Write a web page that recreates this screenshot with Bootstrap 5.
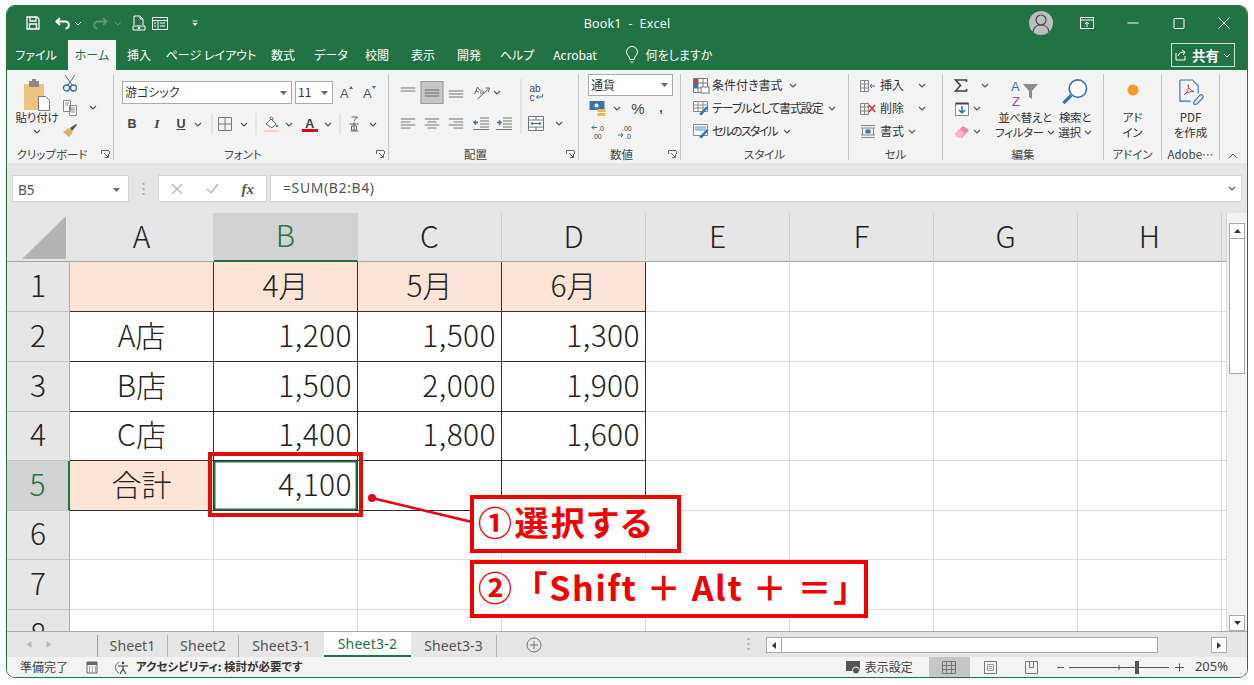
<!DOCTYPE html>
<html lang="ja"><head><meta charset="utf-8"><title>Book1 - Excel</title>
<link href="https://cdn.jsdelivr.net/npm/bootstrap@5.3.0/dist/css/bootstrap.min.css" rel="stylesheet">
<style>
html,body{height:100%;overflow:hidden;background:#fff}
body{position:relative;font-family:"Noto Sans CJK JP","Noto Sans",sans-serif;font-size:12px;color:#444;font-feature-settings:"palt";line-height:1.2}
svg{flex:none;display:block;overflow:visible}
.xwin{position:absolute;left:6px;top:5px;width:1242px;height:673px;border:1px solid #217346;border-radius:9px;overflow:hidden;display:flex;flex-direction:column;background:#f3f3f3}
.tb{display:grid;grid-auto-flow:column;justify-content:start;justify-items:start;align-items:center}
.tb>*{width:max-content;display:flex;justify-content:center;white-space:nowrap;transform:translateX(-50%)}
.xtitle{height:34px;background:#217346;color:#fff;display:grid;grid-template-columns:1fr auto 1fr;align-items:center}
.xtitle .ttext{font-size:12.5px;letter-spacing:.2px;font-family:"Open Sans","Noto Sans CJK JP",sans-serif}
.qat{padding-left:26px;grid-template-columns:30px 15px 22px 18px 21px 21px 35px}
.ctl{justify-self:end;grid-template-columns:46px 46px 46px 45px 23px}
.avatar{width:24px;height:24px;flex:none;border-radius:50%;background:#bdbdbd;align-items:center}
.xtabs{height:30px;background:#217346;display:flex;justify-content:space-between;align-items:center}
.tabrow{height:30px;padding-left:29px;flex-wrap:nowrap;margin:0;grid-template-columns:56px 47px 72px 72px 48px 46px 46px 46px 48px 58px 57px 47px 0}
.tabrow .nav-link{padding:0;height:30px;color:#fff;font-size:12px;align-items:center}
.tabrow .tabon{width:48px;background:#f3f3f3;color:#217346}
.share{width:64px;height:24px;border:1px solid #cfe0d6;margin-right:12px;color:#fff;font-weight:700;font-size:13.5px;gap:4px;padding:0 3px}
.ribbon{height:93px;flex:none;padding:4px 0 3px;display:flex;background:#f3f3f3}
.rgrp{height:86px;flex:none;display:flex;flex-direction:column;border-right:1px solid #c6c6c6}
.rbody{height:74px;display:flex;flex:none}
.rcap{height:12px;display:flex;font-size:11.5px;line-height:12px;color:#444;white-space:nowrap}
.rcap span{flex:1;text-align:center}
.launch{flex:none;width:16px;display:flex;align-items:center;justify-content:center}
.g1{width:107px}.g2{width:275px}.g3{width:190px}.g4{width:102px}.g5{width:168px}.g6{width:94px}.g7{width:161px}.g8{width:58px}.g9{width:58px}
.rc{flex-direction:column}
.combo{height:23px;background:#fff;border:1px solid #ababab;display:flex;align-items:center;justify-content:space-between;padding:0 4px 0 2px;font-size:12px;color:#333}
.cb170{width:170px}.cb38{width:38px;margin-left:3px}.cb85{width:85px;height:22px;margin-left:9px;flex:none}
.cbg{padding-left:8px;padding-top:7px;height:30px;display:flex}
.az{margin-left:14px;grid-template-columns:23px 0;height:23px}
.r22{height:22px}.r23{height:23px}
.f2{margin-top:9px;padding-left:18px;grid-template-columns:25px 24px 17px 14px 13px 19px 12px 16px 17px 21px 18px 12px 14px 19px 0}
.fmt{font-size:12.5px;font-weight:700;color:#444;font-family:"Liberation Sans",sans-serif}
.fmti{font-style:italic;font-family:"Liberation Serif",serif;font-size:13.5px}
.fmtu{text-decoration:underline}
.vs{display:block;width:1px;height:22px;background:#d4d4d4}
.a1{margin-top:7px;height:23px;padding-left:19px;grid-template-columns:24px 24px 26px 15px 39px 0}
.a2{margin-top:8px;height:22px;padding-left:19px;grid-template-rows:22px;grid-template-columns:24px 24px 25px 23px 17px 15px 23px 0}
.vsl{width:1px;height:55px;background:#d4d4d4;align-self:end}
.selb{width:23px;height:23px;background:#c6c6c6;border:1px solid #9e9e9e;flex:none;align-items:center}
.n2{height:23px;padding-left:19px;grid-template-columns:19px 21px 23px 0;margin-top:1px}
.n3{height:23px;padding-left:19px;grid-template-columns:27px 0}
.pct{font-size:15px;color:#444;font-family:"Liberation Sans",sans-serif}
.sline{height:23px;display:flex;align-items:center;padding-left:12px;gap:3px;font-size:12px;white-space:nowrap;color:#333}
.sline svg:last-child{margin-left:3px}
.tsq1{letter-spacing:-1.15px}.tsq2{letter-spacing:-1.8px}
.c1{height:23px;grid-template-columns:24px 30px 0;padding-left:19px;color:#333}
.c3{height:23px;grid-template-columns:24px 20px 0;padding-left:19px;color:#333}
.e1{height:23px;padding-left:18px;grid-template-columns:24px 0}
.e2{height:23px;padding-left:19px;grid-template-columns:15px 0}
.ecol{width:57px;flex:none}
.bigb{flex:none;display:flex;flex-direction:column;align-items:center;padding-top:5px;line-height:15px;font-size:11.5px;color:#333;white-space:nowrap}
.bigb>svg:first-child{height:26px;margin-bottom:5px}
.w50{width:50px;letter-spacing:-.35px}.w57{width:57px}
.w50 span{display:flex;align-items:center;gap:3px}
.cl1{width:42px;margin-left:9px;padding-top:4px;letter-spacing:-.2px}
.bigb>svg.pi{height:33px;margin-bottom:-1px}
.cl2{width:22px;margin-left:1px}
.cl3{width:24px;display:flex;align-items:center;justify-content:center;padding-bottom:8px}
.coll{flex:1;display:flex;align-items:end;justify-content:center;padding-bottom:1px;padding-right:2px}
.fbar{height:50px;flex:none;background:#e6e6e6;padding:12px 5px 11px 5px;display:flex}
.fbox{background:#fff;border:1px solid #d4d4d4;height:27px;display:flex;align-items:center;color:#555}
.nbox{width:117px;padding:3px 8px 0 5px;font-size:13.5px;justify-content:space-between;font-family:"Noto Sans",sans-serif}
.grip{width:29px;flex:none;display:flex;align-items:center;justify-content:center}
.ibox{width:109px;padding:0 12px;justify-content:space-between;margin-right:3px}
.tbox{flex:1;padding:0 5px 0 12px;justify-content:space-between;font-size:14px;font-family:"Noto Sans",sans-serif;letter-spacing:.6px}
.fxs{font-family:"Liberation Serif",serif;font-style:italic;font-weight:700;font-size:15px;color:#555}
.sheetw{height:418px;flex:none;display:flex;background:#fff}
.gridw{width:1220px;height:418px;overflow:hidden;flex:none}
.xl{table-layout:fixed;border-collapse:separate;border-spacing:0;width:1220px;font-size:30px;color:#222;font-family:"Noto Sans CJK JP",sans-serif;font-weight:300;line-height:1}
.xl th,.xl td{padding:0 0 6px 0;border-right:1px solid #dcdcdc;border-bottom:1px solid #dcdcdc;text-align:center;overflow:hidden;white-space:nowrap;font-weight:300}
.xl col.hc{width:63px}.xl col.cc{width:144px}.xl col.ec{width:5px}
.xl thead th{height:48px;background:#e6e6e6;border-right:1px solid #d0d0d0;border-bottom:1px solid #a6a6a6;vertical-align:bottom;padding-bottom:11px}
.xl tbody th{background:#e6e6e6;border-right:1px solid #b0b0b0;border-bottom:1px solid #c6c6c6}
.xl thead th.corner{border-right-color:#e6e6e6;padding:3px 3px 2px 0;vertical-align:top}
.xl thead th.hsel{background:#d2d2d2;color:#217346;border-bottom:2px solid #217346}
.xl tbody th.hsel{background:#d2d2d2;color:#217346;border-right:2px solid #217346}
.rh50 th,.rh50 td{height:50px}.rh49 th,.rh49 td{height:49px}
.xl td.pc{background:#fce4d6}
.xl td.dk{border-right-color:#333;border-bottom-color:#333}
.xl td.num{text-align:right;padding-right:5px;letter-spacing:.4px}
.xl td.sel{box-shadow:inset 0 0 0 1.5px #217346;background:#fff;text-align:right}
.vscroll{width:20px;flex:none;padding:10px 2px 0 2px;background:#f3f3f3;display:flex;flex-direction:column}
.sbtn{flex:none;height:16px;background:#fff;border:1px solid #ababab;display:flex;align-items:center;justify-content:center}
.sthumb{height:135px;background:#fff;border:1px solid #ababab;border-top:0;flex:none}
.strack{flex:1}
.tabbar{height:26px;flex:none;background:#e6e6e6;border-top:1px solid #ababab;display:flex;align-items:flex-start}
.tnav{width:90px;height:25px;flex:none;grid-template-columns:20px 0;padding-left:22px}
.stabs{height:22px;margin:3px 0 0;flex-wrap:nowrap;border-left:1px solid #9e9e9e;width:401px;font-size:14px;color:#555;font-family:"Noto Sans",sans-serif;flex:none}
.stabs .nav-link{color:#555;padding:0;text-align:center;height:22px;line-height:21px;border-right:1px solid #b4b4b4;font-size:14px;letter-spacing:.1px}
.tw70{width:70px}.tw71{width:71px}.tw86{width:86px}
.stabs .ton{background:#fff;color:#217346;border-right:0;border-bottom:2px solid #217346;margin:-3px 0 0 -1px;height:25px;line-height:24px;width:87px;letter-spacing:.25px}
.tplus{flex:none;margin-top:5px;margin-left:28px}
.tgrip{width:19px;margin-left:205px;margin-top:6px;flex:none;display:flex;justify-content:flex-start}
.hs{display:flex;margin-top:5px;height:16px;flex:none;width:461px}
.hb{width:16px;flex:none;height:16px;background:#fff;border:1px solid #ababab;display:flex;align-items:center;justify-content:center}
.hthumb{width:376px;height:16px;background:#fff;border:1px solid #ababab;border-left:0;flex:none}
.hmid{flex:1}
.status{height:20px;flex:none;background:#f3f3f3;display:flex;align-items:center;font-size:12px;color:#444}
.st1{padding-left:13px;width:79px;flex:none}
.stb{font-weight:700;font-size:11.5px;color:#333;white-space:nowrap;margin-left:3px}
.sic{flex:none;width:28px}
.stg{flex:1}
.vsel{width:41px;height:20px;background:#c6c6c6;display:flex;align-items:center;justify-content:center;flex:none}
.vb{width:41px;display:flex;justify-content:center;flex:none}
.zoomz{display:flex;align-items:center;flex:none;margin-left:5px;margin-right:19px}
.ztxt{font-size:13px;color:#444;font-family:"Noto Sans",sans-serif;margin-left:11px}
.redb{position:absolute;border-style:solid;background:transparent}
.rb0{left:208px;top:452px;width:155px;height:65px;border-width:4px;border-color:#e00d0d}
.note{position:absolute;border:4px solid #f00000;background:#fff;color:#f00000;font-weight:700;display:flex;align-items:center;white-space:nowrap;padding-bottom:3px}
.nt1{left:470px;top:495px;width:211px;height:58px;font-size:34px;padding-left:4px;letter-spacing:2.4px}
.nt2{left:470px;top:560px;width:398px;height:58px;font-size:34px;padding-left:4px;letter-spacing:1.6px;font-feature-settings:normal}
.leader{position:absolute;left:364px;top:488px}
</style></head>
<body>
<svg width="0" height="0" class="d-none" aria-hidden="true"><defs>
<symbol id="ch" viewBox="0 0 8 5"><path d="M1 1l3 3 3-3" fill="none" stroke="#555" stroke-width="1.2"/></symbol>
<symbol id="chw" viewBox="0 0 8 5"><path d="M1 1l3 3 3-3" fill="none" stroke="#fff"/></symbol>
<symbol id="dn" viewBox="0 0 7 4"><path d="M0 0h7L3.500 4z" fill="#666"/></symbol>
<symbol id="lc" viewBox="0 0 9 9"><path d="M.5 4V.5H8M3 3l4 4M4 7.500h3.500V4M8.500 1v3" fill="none" stroke="#666"/></symbol>
<symbol id="lt" viewBox="0 0 15 11"><path d="M0 1h15M0 4h15" stroke="#777" fill="none"/></symbol>
<symbol id="lm" viewBox="0 0 15 11"><path d="M0 3h15M0 6h15M0 9h15" stroke="#666" fill="none"/></symbol>
<symbol id="lb" viewBox="0 0 15 11"><path d="M0 4h15M0 7h15M0 10h15" stroke="#777" fill="none"/></symbol>
<symbol id="al" viewBox="0 0 15 11"><path d="M0 1h15M0 4h10M0 7h15M0 10h10" stroke="#777" fill="none"/></symbol>
<symbol id="ac" viewBox="0 0 15 11"><path d="M0 1h15M3 4h9M0 7h15M3 10h9" stroke="#777" fill="none"/></symbol>
<symbol id="ar" viewBox="0 0 15 11"><path d="M0 1h15M5 4h10M0 7h15M5 10h10" stroke="#777" fill="none"/></symbol>
</defs></svg>

<div class="xwin">
 <div class="xtitle">
  <div class="tb qat">
   <span><svg width="14" height="14" viewBox="0 0 14 14"><path d="M1 1h10l2 2v10H1zM4 1v4h6V1M3.500 13V8h7v5" fill="none" stroke="#fff" stroke-width="1.300"/></svg></span>
   <span><svg width="16" height="12" viewBox="0 0 16 12"><path d="M5 1L1.500 4.500 5 8M2 4.500h8c5 0 5 7 .5 7" fill="none" stroke="#fff" stroke-width="2"/></svg></span>
   <span><svg width="8" height="5"><use href="#chw"/></svg></span>
   <span><svg width="16" height="12" viewBox="0 0 16 12"><path d="M11 1l3.500 3.500L11 8M14 4.500H6c-5 0-5 7-.5 7" fill="none" stroke="#5f9478" stroke-width="2"/></svg></span>
   <span><svg width="8" height="5" viewBox="0 0 8 5"><path d="M1 1l3 3 3-3" fill="none" stroke="#5f9478"/></svg></span>
   <span><svg width="14" height="16" viewBox="0 0 14 16"><path d="M2 10V1h6l3 3v6M8 1v3h3M1 11h12v4H1z" fill="none" stroke="#fff"/><circle cx="7" cy="13" r="1.300" fill="#fff"/></svg></span>
   <span><svg width="16" height="13" viewBox="0 0 16 13"><path d="M.5.500h15v12H.500zM.5 3.500h15M6 3.500v9M8 6h5M8 9h5M2 6h2M2 9h2" fill="none" stroke="#fff"/></svg></span>
   <span><svg width="7" height="7" viewBox="0 0 7 7"><path d="M1 1h5" stroke="#fff"/><path d="M1 3h5L3.500 6z" fill="#fff"/></svg></span>
  </div>
  <div class="ttext">Book1 &nbsp;-&nbsp; Excel</div>
  <div class="tb ctl">
   <span class="avatar"><svg width="24" height="24" viewBox="0 0 24 24"><circle cx="12" cy="9" r="5" fill="none" stroke="#444" stroke-width="1.200"/><path d="M4 21c1-6 4-7 8-7s7 1 8 7" fill="none" stroke="#444" stroke-width="1.200"/></svg></span>
   <span><svg width="14" height="12" viewBox="0 0 14 12"><path d="M.5.500h13v11H.500zM.5 3h13" fill="none" stroke="#fff"/><path d="M7 10V5M5 7l2-2 2 2" fill="none" stroke="#fff"/></svg></span>
   <span><svg width="11" height="2"><path d="M0 1h11" stroke="#fff"/></svg></span>
   <span><svg width="11" height="11"><rect x=".5" y=".5" width="10" height="10" rx="1" fill="none" stroke="#fff"/></svg></span>
   <span><svg width="12" height="12"><path d="M.5.500l11 11M11.500.500l-11 11" stroke="#fff"/></svg></span>
  </div>
 </div>
 <div class="xtabs">
  <ul class="nav tb tabrow">
   <li class="nav-item"><a class="nav-link d-flex">ファイル</a></li>
   <li class="nav-item"><a class="nav-link d-flex justify-content-center tabon">ホーム</a></li>
   <li class="nav-item"><a class="nav-link d-flex">挿入</a></li>
   <li class="nav-item"><a class="nav-link d-flex">ページ レイアウト</a></li>
   <li class="nav-item"><a class="nav-link d-flex">数式</a></li>
   <li class="nav-item"><a class="nav-link d-flex">データ</a></li>
   <li class="nav-item"><a class="nav-link d-flex">校閲</a></li>
   <li class="nav-item"><a class="nav-link d-flex">表示</a></li>
   <li class="nav-item"><a class="nav-link d-flex">開発</a></li>
   <li class="nav-item"><a class="nav-link d-flex">ヘルプ</a></li>
   <li class="nav-item"><a class="nav-link d-flex">Acrobat</a></li>
   <li class="nav-item"><a class="nav-link d-flex"><svg class="align-self-center" width="13" height="18" viewBox="0 0 13 18"><path d="M4.500 13.500C4 10 1 9 1 6a5.500 5.500 0 0 1 11 0c0 3-3 4-3.500 7.500zM5 16h3" fill="none" stroke="#fff"/></svg></a></li>
   <li class="nav-item"><a class="nav-link d-flex">何をしますか</a></li>
  </ul>
  <div class="share d-flex align-items-center justify-content-between">
   <svg width="13" height="12" viewBox="0 0 13 12"><path d="M1 4v7h9V7M3 7c1-3 3-4 6-4M7 1l3 2-2 3" fill="none" stroke="#fff"/></svg>
   <span>共有</span>
   <svg width="8" height="5"><use href="#chw"/></svg>
  </div>
 </div>

 <div class="ribbon">
  <!-- clipboard -->
  <div class="rgrp g1">
   <div class="rbody">
    <div class="bigb cl1">
     <svg class="pi" width="28" height="33" viewBox="0 0 28 33"><rect x="1" y="6" width="20" height="26" fill="#ebc57f"/><rect x="6" y="3" width="10" height="6" fill="#8a8a8a"/><rect x="9" y="1" width="4" height="3" fill="#8a8a8a"/><path d="M15.500 18.500h7l4 4v10h-11z" fill="#fff" stroke="#777"/></svg>
     <span>貼り付け</span>
     <svg class="mt-1" width="8" height="5"><use href="#ch"/></svg>
    </div>
    <div class="d-flex flex-column align-items-center cl2">
     <svg width="16" height="18" viewBox="0 0 16 18"><path d="M3 1l7 10M13 1L6 11" stroke="#666" fill="none"/><circle cx="4.500" cy="14" r="3" fill="none" stroke="#3d6f9c" stroke-width="1.300"/><circle cx="11.500" cy="14" r="3" fill="none" stroke="#3d6f9c" stroke-width="1.300"/></svg>
     <svg class="mt-2" width="15" height="16" viewBox="0 0 15 16"><path d="M.5.500h7v11h-7zM6.500 5.500h7v10h-7zM2 3h4M2 5h3M8 8h4M8 10h4M8 12h4" fill="#fff" stroke="#888"/></svg>
     <svg class="mt-2" width="15" height="14" viewBox="0 0 15 14"><path d="M0 8l6 5 4-5-4-4z" fill="#e0b060"/><path d="M7 4l2 3 5-6-1-1z" fill="#555"/></svg>
    </div>
    <div class="cl3"><svg width="8" height="5"><use href="#ch"/></svg></div>
   </div>
   <div class="rcap"><span>クリップボード</span><div class="launch"><svg width="9" height="9"><use href="#lc"/></svg></div></div>
  </div>
  <!-- font -->
  <div class="rgrp g2">
   <div class="rbody rc">
    <div class="cbg">
     <div class="combo cb170"><span>游ゴシック</span><svg width="7" height="4"><use href="#dn"/></svg></div>
     <div class="combo cb38"><span>11</span><svg width="7" height="4"><use href="#dn"/></svg></div>
     <div class="tb az">
      <span><svg width="14" height="15" viewBox="0 0 14 15"><text x="0" y="13" font-size="13" fill="#555" font-family="Liberation Sans">A</text><path d="M9 4l2-3 2 3" fill="#3d6f9c"/></svg></span>
      <span><svg width="14" height="15" viewBox="0 0 14 15"><text x="0" y="13" font-size="13" fill="#555" font-family="Liberation Sans">A</text><path d="M9 1l2 3 2-3" fill="#3d6f9c"/></svg></span>
     </div>
    </div>
    <div class="tb f2 r22">
     <span class="fmt">B</span><span class="fmt fmti">I</span><span class="fmt fmtu">U</span>
     <span><svg width="8" height="5"><use href="#ch"/></svg></span>
     <span><i class="vs"></i></span>
     <span><svg width="14" height="14" viewBox="0 0 14 14"><path d="M.5.500h13v13H.500zM7 .500v13M.5 7h13" fill="none" stroke="#777"/></svg></span>
     <span><svg width="8" height="5"><use href="#ch"/></svg></span>
     <span><i class="vs"></i></span>
     <span><svg width="16" height="16" viewBox="0 0 16 16"><path d="M2 8l5-5 5 5-4 4z" fill="#fff" stroke="#666"/><path d="M6 3c0-3 3-3 3 1" fill="none" stroke="#666"/><path d="M13 8l1.500 3-3 0z" fill="#3d7cc0"/><rect y="14" width="15" height="2" fill="#f8d8c0"/></svg></span>
     <span><svg width="8" height="5"><use href="#ch"/></svg></span>
     <span><svg width="16" height="17" viewBox="0 0 16 17"><text x="3" y="12" font-size="13" font-weight="700" fill="#444" font-family="Liberation Sans">A</text><rect y="13" width="16" height="3" fill="#e00010"/></svg></span>
     <span><svg width="8" height="5"><use href="#ch"/></svg></span>
     <span><i class="vs"></i></span>
     <span><svg width="11" height="16" viewBox="0 0 11 16"><path d="M3 1h6l-3 3M6 4v1M1 8h9M5.500 6v9M3 10h5v4H3zM2 15h8" fill="none" stroke="#666"/></svg></span>
     <span><svg width="8" height="5"><use href="#ch"/></svg></span>
    </div>
   </div>
   <div class="rcap"><span>フォント</span><div class="launch"><svg width="9" height="9"><use href="#lc"/></svg></div></div>
  </div>
  <!-- align -->
  <div class="rgrp g3">
   <div class="rbody rc">
    <div class="tb a1">
     <span><svg width="15" height="11"><use href="#lt"/></svg></span>
     <span class="selb"><svg width="15" height="11"><use href="#lm"/></svg></span>
     <span><svg width="15" height="11"><use href="#lb"/></svg></span>
     <span><svg width="17" height="15" viewBox="0 0 17 15"><path d="M1 9l3-7 3 4M2.500 6l3 1M7 7c2-2 3-1 3 0s-1 2-3 1zM4 14L15 4M12 3l4 0-1 4" fill="none" stroke="#666"/></svg></span>
     <span><svg width="8" height="5"><use href="#ch"/></svg></span>
     <span><svg width="15" height="19" viewBox="0 0 15 19"><text x="1" y="9" font-size="10" fill="#444" font-family="Liberation Sans">ab</text><text x="1" y="18" font-size="10" fill="#444" font-family="Liberation Sans">c</text><path d="M14 11v3H8M10 12l-2 2 2 2" fill="none" stroke="#3d6f9c"/></svg></span>
    </div>
    <div class="tb a2">
     <span><svg width="15" height="11"><use href="#al"/></svg></span>
     <span><svg width="15" height="11"><use href="#ac"/></svg></span>
     <span><svg width="15" height="11"><use href="#ar"/></svg></span>
     <span><svg width="16" height="13" viewBox="0 0 16 13"><path d="M7 1h9M7 4h9M7 7h9M7 10h9M0 12.500h16" stroke="#777" fill="none"/><path d="M5 5.500H1M3 3.500l-2 2 2 2" stroke="#2f6fb0" fill="none" stroke-width="1.300"/></svg></span>
     <span><svg width="16" height="13" viewBox="0 0 16 13"><path d="M7 1h9M7 4h9M7 7h9M7 10h9M0 12.500h16" stroke="#777" fill="none"/><path d="M1 5.500h4M3 3.500l2 2-2 2" stroke="#2f6fb0" fill="none" stroke-width="1.300"/></svg></span>
     <span class="vsl"></span>
     <span><svg width="16" height="15" viewBox="0 0 16 15"><path d="M.5.500h15v14H.500zM.5 4h15M.5 11h15M8 .500V4M8 11v3.500" fill="#fff" stroke="#777"/><path d="M3 7.500h10M5 6L3 7.500 5 9M11 6l2 1.500L11 9" fill="none" stroke="#2f6fb0"/></svg></span>
     <span><svg width="8" height="5"><use href="#ch"/></svg></span>
    </div>
   </div>
   <div class="rcap"><span>配置</span><div class="launch"><svg width="9" height="9"><use href="#lc"/></svg></div></div>
  </div>
  <!-- number -->
  <div class="rgrp g4">
   <div class="rbody rc">
    <div class="combo cb85"><span>通貨</span><svg width="7" height="4"><use href="#dn"/></svg></div>
    <div class="tb n2">
     <span><svg width="17" height="16" viewBox="0 0 17 16"><rect width="15" height="9" fill="#3a75b0"/><circle cx="7" cy="4.500" r="2" fill="#fff"/><rect x="8" y="8" width="8" height="3" fill="#e8b860"/><rect x="8" y="12" width="8" height="3" fill="#e8b860"/></svg></span>
     <span><svg width="8" height="5"><use href="#ch"/></svg></span>
     <span class="pct">%</span>
     <span class="fmt">,</span>
    </div>
    <div class="tb n3">
     <span><svg width="16" height="15" viewBox="0 0 16 15"><path d="M7 3.500H2M4 1.500l-2 2 2 2" fill="none" stroke="#2f6fb0"/><text x="8" y="7" font-size="7" fill="#444" font-family="Liberation Sans">.0</text><text x="2" y="14.500" font-size="7" fill="#444" font-family="Liberation Sans">.00</text></svg></span>
     <span><svg width="16" height="15" viewBox="0 0 16 15"><text x="5" y="7" font-size="7" fill="#444" font-family="Liberation Sans">.00</text><path d="M1 11h5M4 9l2 2-2 2" fill="none" stroke="#2f6fb0"/><text x="8" y="14.500" font-size="7" fill="#444" font-family="Liberation Sans">.0</text></svg></span>
    </div>
   </div>
   <div class="rcap"><span>数値</span><div class="launch"><svg width="9" height="9"><use href="#lc"/></svg></div></div>
  </div>
  <!-- styles -->
  <div class="rgrp g5">
   <div class="rbody rc">
    <div class="sline"><svg width="16" height="15" viewBox="0 0 16 15"><path d="M.5.500h14v14H.500zM.5 5h14M.5 10h14M5 .500v14M10 .500v14" fill="#fff" stroke="#777"/><rect x="1" y="1" width="4" height="4" fill="#c04040"/><rect x="1" y="5" width="4" height="5" fill="#3a75b0"/><rect x="8" y="9" width="8" height="6" fill="#fff" stroke="#777"/></svg><span>条件付き書式</span><svg width="8" height="5"><use href="#ch"/></svg></div>
    <div class="sline"><svg width="16" height="15" viewBox="0 0 16 15"><path d="M.5.500h14v10H.500zM.5 4h14M.5 7h14M5 .500v10M10 .500v10" fill="#fff" stroke="#888"/><path d="M6 13l8-8 1.500 1.500-7 8z" fill="#3a75b0"/></svg><span class="tsq1">テーブルとして書式設定</span><svg width="8" height="5"><use href="#ch"/></svg></div>
    <div class="sline"><svg width="16" height="15" viewBox="0 0 16 15"><path d="M.5.500h14v11H.500z" fill="#fff" stroke="#888"/><rect x="2" y="2" width="11" height="5" fill="#a9c4de"/><path d="M6 13l8-8 1.500 1.500-7 8z" fill="#3a75b0"/></svg><span class="tsq2">セルのスタイル</span><svg width="8" height="5"><use href="#ch"/></svg></div>
   </div>
   <div class="rcap"><span>スタイル</span></div>
  </div>
  <!-- cells -->
  <div class="rgrp g6">
   <div class="rbody rc">
    <div class="tb c1">
     <span><svg width="16" height="14" viewBox="0 0 16 14"><path d="M.5 1.500h8M.5 5h8M.5 9h8M.5 12.500h8M.5 1.500v11M4.500 1.500v11M8.500 1.500v11" fill="none" stroke="#888"/><path d="M15 7H10M12 5l-2 2 2 2" fill="none" stroke="#2f6fb0"/></svg></span>
     <span>挿入</span><span><svg width="8" height="5"><use href="#ch"/></svg></span>
    </div>
    <div class="tb c1">
     <span><svg width="16" height="14" viewBox="0 0 16 14"><path d="M.5 1.500h8M.5 5h8M.5 9h8M.5 12.500h8M.5 1.500v11M4.500 1.500v11M8.500 1.500v11" fill="none" stroke="#888"/><path d="M9 3l6 7M15 3l-6 7" stroke="#d03030" stroke-width="1.500"/></svg></span>
     <span>削除</span><span><svg width="8" height="5"><use href="#ch"/></svg></span>
    </div>
    <div class="tb c3">
     <span><svg width="15" height="15" viewBox="0 0 15 15"><path d="M.5 1.500h14M.5 4h14M.5 11h14M.5 13.500h14M2 4v7M13 4v7" fill="none" stroke="#888"/><rect x="5" y="5.500" width="5" height="4" fill="#3a75b0"/></svg></span>
     <span>書式</span><span><svg width="8" height="5"><use href="#ch"/></svg></span>
    </div>
   </div>
   <div class="rcap"><span>セル</span></div>
  </div>
  <!-- edit -->
  <div class="rgrp g7">
   <div class="rbody">
    <div class="ecol">
     <div class="tb e1"><span><svg width="13" height="13" viewBox="0 0 13 13"><path d="M12 3V1H1l5 5.500L1 12h11v-2" fill="none" stroke="#444" stroke-width="1.600"/></svg></span><span><svg width="8" height="5"><use href="#ch"/></svg></span></div>
     <div class="tb e2"><span><svg width="14" height="14" viewBox="0 0 14 14"><path d="M.5 1.500h13v12H.500z" fill="#fff" stroke="#888"/><path d="M.5 1.500h13" stroke="#444" stroke-width="2"/><path d="M7 4v7M4 8l3 3 3-3" fill="none" stroke="#2f6fb0" stroke-width="1.500"/></svg></span><span><svg width="8" height="5"><use href="#ch"/></svg></span></div>
     <div class="tb e2"><span><svg width="14" height="12" viewBox="0 0 14 12"><path d="M8 0l6 4-7 8-5-1-2-3z" fill="#e88aa8"/><path d="M0 8l4-5 6 4-4 5-4-1z" fill="#f2b7c8"/></svg></span><span><svg width="8" height="5"><use href="#ch"/></svg></span></div>
    </div>
    <div class="bigb w50"><svg width="28" height="26" viewBox="0 0 28 26"><text x="0" y="12" font-size="13" fill="#3a75b0" font-family="Liberation Sans">A</text><text x="1" y="27" font-size="13" fill="#8b4fa8" font-family="Liberation Sans">Z</text><path d="M12 5h15l-6 7v8l-3-2v-6z" fill="#8a8a8a"/></svg><span>並べ替えと</span><span>フィルター<svg width="8" height="5"><use href="#ch"/></svg></span></div>
    <div class="bigb w50"><svg width="28" height="27" viewBox="0 0 28 27"><circle cx="17" cy="10" r="9" fill="#fff" stroke="#3a75b0" stroke-width="1.800"/><path d="M10 17l-8 8" stroke="#3a75b0" stroke-width="3.500"/></svg><span>検索と</span><span>選択<svg width="8" height="5"><use href="#ch"/></svg></span></div>
   </div>
   <div class="rcap"><span>編集</span></div>
  </div>
  <!-- add-in -->
  <div class="rgrp g8">
   <div class="rbody"><div class="bigb w57"><svg width="12" height="26" viewBox="0 0 12 26"><circle cx="6" cy="11" r="5.500" fill="#f59b2b"/></svg><span>アド</span><span>イン</span></div></div>
   <div class="rcap"><span>アドイン</span></div>
  </div>
  <!-- adobe -->
  <div class="rgrp g9">
   <div class="rbody"><div class="bigb w57"><svg width="26" height="27" viewBox="0 0 26 27"><path d="M1.500 1h13l6 6v8M1.500 1v22h11" fill="none" stroke="#3a75b0" stroke-width="1.200"/><path d="M6 16c3-1 5-6 4-10 0 4 3 6 6 7-4 0-7 1-10 3z" fill="none" stroke="#b04040"/><path d="M16 24l6-7a2 2 0 0 1 3 3l-6 6c-3 1-4-1-3-2z" fill="none" stroke="#3a75b0" stroke-width="1.200"/></svg><span>PDF</span><span>を作成</span></div></div>
   <div class="rcap"><span>Adobe…</span></div>
  </div>
  <div class="coll"><svg width="10" height="6" viewBox="0 0 10 6"><path d="M1 5l4-4 4 4" fill="none" stroke="#555"/></svg></div>
 </div>

 <div class="fbar">
  <div class="fbox nbox"><span>B5</span><svg width="7" height="4"><use href="#dn"/></svg></div>
  <div class="grip"><svg width="3" height="12" viewBox="0 0 3 12"><path d="M1.500 0v2M1.500 5v2M1.500 10v2" stroke="#aaa" stroke-width="2"/></svg></div>
  <div class="fbox ibox">
   <svg width="12" height="12"><path d="M1 1l10 10M11 1L1 11" stroke="#b5b5b5" stroke-width="1.300"/></svg>
   <svg width="13" height="11"><path d="M1 6l4 4 7-9" fill="none" stroke="#b5b5b5" stroke-width="1.300"/></svg>
   <span class="fxs">fx</span>
  </div>
  <div class="fbox tbox"><span>=SUM(B2:B4)</span><svg width="8" height="5"><use href="#ch"/></svg></div>
 </div>

 <div class="sheetw">
  <div class="gridw">
   <table class="xl">
    <colgroup><col class="hc"><col class="cc"><col class="cc"><col class="cc"><col class="cc"><col class="cc"><col class="cc"><col class="cc"><col class="cc"><col class="ec"></colgroup>
    <thead><tr>
     <th class="corner"><svg class="ms-auto" width="44" height="43" viewBox="0 0 44 43"><path d="M44 0v43H0z" fill="#b4b4b4"/></svg></th>
     <th>A</th><th class="hsel">B</th><th>C</th><th>D</th><th>E</th><th>F</th><th>G</th><th>H</th><th></th>
    </tr></thead>
    <tbody>
     <tr class="rh50"><th>1</th><td class="pc dk"></td><td class="pc dk">4月</td><td class="pc dk">5月</td><td class="pc dk">6月</td><td></td><td></td><td></td><td></td><td></td></tr>
     <tr class="rh50"><th>2</th><td class="dk">A店</td><td class="dk num">1,200</td><td class="dk num">1,500</td><td class="dk num">1,300</td><td></td><td></td><td></td><td></td><td></td></tr>
     <tr class="rh50"><th>3</th><td class="dk">B店</td><td class="dk num">1,500</td><td class="dk num">2,000</td><td class="dk num">1,900</td><td></td><td></td><td></td><td></td><td></td></tr>
     <tr class="rh49"><th>4</th><td class="dk">C店</td><td class="dk num">1,400</td><td class="dk num">1,800</td><td class="dk num">1,600</td><td></td><td></td><td></td><td></td><td></td></tr>
     <tr class="rh50"><th class="hsel">5</th><td class="pc dk">合計</td><td class="dk num sel">4,100</td><td class="dk"></td><td class="dk"></td><td></td><td></td><td></td><td></td><td></td></tr>
     <tr class="rh49"><th>6</th><td></td><td></td><td></td><td></td><td></td><td></td><td></td><td></td><td></td></tr>
     <tr class="rh50"><th>7</th><td></td><td></td><td></td><td></td><td></td><td></td><td></td><td></td><td></td></tr>
     <tr class="rh50"><th>8</th><td></td><td></td><td></td><td></td><td></td><td></td><td></td><td></td><td></td></tr>
    </tbody>
   </table>
  </div>
  <div class="vscroll">
   <div class="sbtn"><svg width="7" height="4" viewBox="0 0 7 4"><path d="M0 4h7L3.500 0z" fill="#333"/></svg></div>
   <div class="sthumb"></div>
   <div class="strack"></div>
   <div class="sbtn"><svg width="7" height="4" viewBox="0 0 7 4"><path d="M0 0h7L3.500 4z" fill="#333"/></svg></div>
  </div>
 </div>

 <div class="tabbar">
  <div class="tb tnav">
   <span><svg width="5" height="7"><path d="M5 0v7L0 3.500z" fill="#bbb"/></svg></span>
   <span><svg width="5" height="7"><path d="M0 0v7l5-3.500z" fill="#bbb"/></svg></span>
  </div>
  <ul class="nav stabs">
   <li class="nav-item"><a class="nav-link tw70">Sheet1</a></li>
   <li class="nav-item"><a class="nav-link tw71">Sheet2</a></li>
   <li class="nav-item"><a class="nav-link tw86">Sheet3-1</a></li>
   <li class="nav-item"><a class="nav-link ton">Sheet3-2</a></li>
   <li class="nav-item"><a class="nav-link tw86">Sheet3-3</a></li>
  </ul>
  <svg class="tplus" width="16" height="16" viewBox="0 0 16 16"><circle cx="8" cy="8" r="7" fill="none" stroke="#777"/><path d="M8 4v8M4 8h8" stroke="#777"/></svg>
  <div class="tgrip"><svg width="3" height="13" viewBox="0 0 3 13"><path d="M1.500 0v2M1.500 5v2M1.500 10v2" stroke="#aaa" stroke-width="2"/></svg></div>
  <div class="hs">
   <div class="hb"><svg width="4" height="7"><path d="M4 0v7L0 3.500z" fill="#333"/></svg></div>
   <div class="hthumb"></div><div class="hmid"></div>
   <div class="hb"><svg width="4" height="7"><path d="M0 0v7l4-3.500z" fill="#333"/></svg></div>
  </div>
 </div>

 <div class="status">
  <span class="st1">準備完了</span>
  <div class="sic"><svg width="12" height="13" viewBox="0 0 12 13"><path d="M1 1h10v11H1z" fill="none" stroke="#666"/><path d="M1 1h10v3H1z" fill="#666"/><path d="M3 6h1M6 6h1M9 6h1M3 8h1M6 8h1M9 8h1M3 10h1M6 10h1M9 10h1" stroke="#666"/></svg></div>
  <svg class="me-1" width="15" height="15" viewBox="0 0 15 15"><path d="M5 2a6 6 0 0 0 0 11" fill="none" stroke="#666"/><circle cx="9" cy="3" r="1.300" fill="#444"/><path d="M4 6h10M9 6v3l-3 5M9 9l3 5" fill="none" stroke="#444" stroke-width="1.200"/></svg>
  <span class="stb">アクセシビリティ: 検討が必要です</span>
  <div class="stg"></div>
  <svg class="me-1" width="15" height="15" viewBox="0 0 15 15"><path d="M0 1h14v10H0z" fill="#555"/><circle cx="10" cy="10.500" r="3.500" fill="#555" stroke="#f3f3f3"/></svg>
  <span class="me-3">表示設定</span>
  <div class="vsel"><svg width="14" height="13" viewBox="0 0 14 13"><path d="M.5.500h13v12H.500zM.5 4.500h13M.5 8.500h13M4.500.500v12M9.500.500v12" fill="none" stroke="#777"/></svg></div>
  <div class="vb"><svg width="13" height="13" viewBox="0 0 13 13"><path d="M.5.500h12v12H.500z" fill="none" stroke="#777"/><path d="M3.500 3.500h6v6h-6zM5 5.500h3M5 7.500h3" fill="none" stroke="#999"/></svg></div>
  <div class="vb"><svg width="13" height="13" viewBox="0 0 13 13"><path d="M.5.500h12v12H.500zM4.500.500v6h4v-6" fill="none" stroke="#777"/></svg></div>
  <div class="zoomz">
   <svg width="127" height="13" viewBox="0 0 127 13"><path d="M0 6.500h7M12 6.500h100M118 6.500h9M122.500 2.500v8" stroke="#555" fill="none"/><path d="M62 4v5" stroke="#555"/><rect x="78" y="0" width="4" height="13" fill="#555"/></svg>
   <span class="ztxt">205%</span>
  </div>
 </div>
</div>

<div class="redb rb0"></div>
<svg class="leader" width="110" height="40" viewBox="0 0 110 40"><circle cx="8" cy="10" r="4" fill="#e60012"/><path d="M8 10l100 24" stroke="#e60012" stroke-width="2.500"/></svg>
<div class="note nt1">①選択する</div>
<div class="note nt2">②「Shift ＋ Alt ＋ ＝」</div>
<script src="https://cdn.jsdelivr.net/npm/bootstrap@5.3.0/dist/js/bootstrap.bundle.min.js"></script>
</body></html>
